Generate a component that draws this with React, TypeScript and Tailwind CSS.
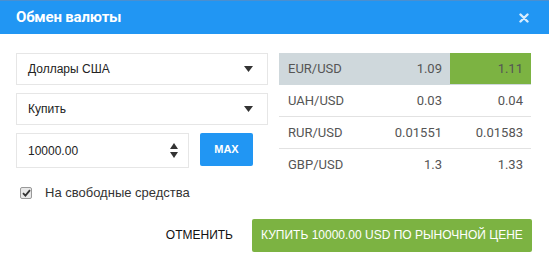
const rates = [
  { pair: "EUR/USD", bid: "1.09", ask: "1.11", active: true },
  { pair: "UAH/USD", bid: "0.03", ask: "0.04", active: false },
  { pair: "RUR/USD", bid: "0.01551", ask: "0.01583", active: false },
  { pair: "GBP/USD", bid: "1.3", ask: "1.33", active: false },
];

function Caret() {
  return (
    <svg width="9" height="6" viewBox="0 0 9 6" className="shrink-0">
      <path d="M0 0h9L4.5 6z" fill="#333" />
    </svg>
  );
}

function SelectBox({ label }: { label: string }) {
  return (
    <div className="flex items-center justify-between h-[32px] border border-[#e6e6e6] pl-[11px] pr-[14px] text-[12px] text-[#222]">
      <span>{label}</span>
      <Caret />
    </div>
  );
}

export default function App() {
  return (
    <div className="w-[549px] h-[270px] bg-white overflow-hidden font-['Liberation_Sans',Arial,sans-serif]">
      {/* Header */}
      <div className="h-[34px] bg-[#2196f3] border-t border-[#4a8fd0] flex items-center justify-between pl-4 pr-[20px]">
        <span className="text-white text-[15px] font-bold font-['Roboto',sans-serif] tracking-[-0.2px]">
          Обмен валюты
        </span>
        <svg width="10" height="10" viewBox="0 0 10 10">
          <path d="M1.5 1.5l7 7M8.5 1.5l-7 7" stroke="#d8ecfd" strokeWidth="2.4" strokeLinecap="round" />
        </svg>
      </div>

      {/* Body */}
      <div className="flex gap-[11px] pl-4 pt-[19px]">
        <div className="w-[252px] flex flex-col gap-[8px]">
          <SelectBox label="Доллары США" />
          <SelectBox label="Купить" />
          <div className="flex gap-[11px]">
            <div className="w-[173px] h-[35px] border border-[#e6e6e6] flex items-center justify-between pl-[11px] pr-[10px] text-[12px] text-[#222]">
              <span>10000.00</span>
              <div className="flex flex-col gap-[3px]">
                <svg width="8" height="6" viewBox="0 0 8 6">
                  <path d="M0 6h8L4 0z" fill="#333" />
                </svg>
                <svg width="8" height="6" viewBox="0 0 8 6">
                  <path d="M0 0h8L4 6z" fill="#333" />
                </svg>
              </div>
            </div>
            <button className="w-[53px] h-[33px] bg-[#2196f3] rounded-[2px] text-white text-[11px] font-bold">
              MAX
            </button>
          </div>
        </div>

        <div className="w-[252px] font-['Roboto',sans-serif] text-[13px] text-[#555]">
          {rates.map((r, i) => (
            <div
              key={r.pair}
              className={
                "flex h-[32px] items-center " +
                (r.active ? "bg-[#cfd8dc]" : "") +
                (i > 0 && i < rates.length - 1 ? " border-b border-[#e2e2e2]" : "") +
                (i === 0 ? " border-b border-transparent" : "")
              }
            >
              <div className="w-[91px] pl-[9px]">{r.pair}</div>
              <div className="w-[80px] text-right pr-[8px]">{r.bid}</div>
              <div
                className={
                  "w-[81px] h-full flex items-center justify-end pr-[8px] " +
                  (r.active ? "bg-[#7cb342]" : "")
                }
              >
                {r.ask}
              </div>
            </div>
          ))}
        </div>
      </div>

      {/* Checkbox */}
      <div className="flex items-center gap-[13px] pl-[20px] mt-[2px] text-[13px] text-[#333]">
        <div className="w-[12px] h-[12px] rounded-[2px] border border-[#999] bg-[#e8e8e8] flex items-center justify-center">
          <svg width="9" height="8" viewBox="0 0 9 8">
            <path d="M1 4.2l2.4 2.4L8 1.2" stroke="#333" strokeWidth="1.8" fill="none" />
          </svg>
        </div>
        <span>На свободные средства</span>
      </div>

      {/* Footer buttons */}
      <div className="flex items-center justify-end gap-[19px] pr-[17px] mt-[16px]">
        <button className="text-[12px] text-[#111] whitespace-nowrap">ОТМЕНИТЬ</button>
        <button className="h-[33px] w-[280px] bg-[#7cb342] rounded-[2px] text-white text-[12px] whitespace-nowrap">
          КУПИТЬ 10000.00 USD ПО РЫНОЧНОЙ ЦЕНЕ
        </button>
      </div>
    </div>
  );
}
